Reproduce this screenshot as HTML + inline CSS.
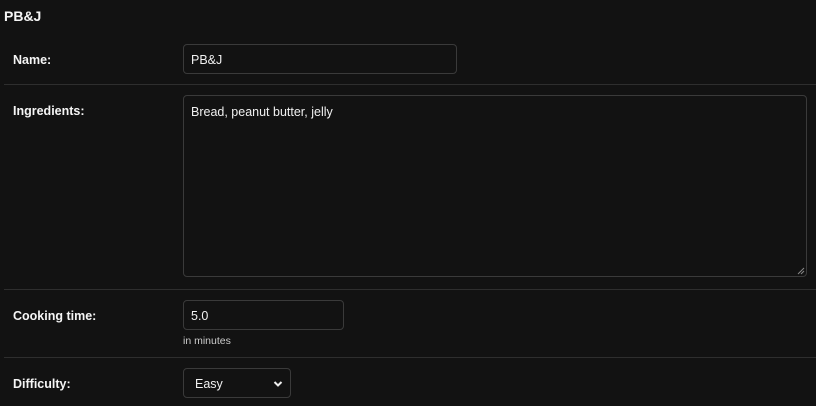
<!DOCTYPE html>
<html><head><style>
body{margin:0;background:#121212;width:816px;height:406px;overflow:hidden;font-family:"Liberation Sans",sans-serif;color:#eee;position:relative}
.a{position:absolute}
.t{left:4px;top:8px;font-size:14px;font-weight:bold;color:#f5f5f5}
.l{left:13px;font-size:12.5px;font-weight:bold;color:#f5f5f5}
.b{border:1px solid #3a3a3a;border-radius:4px;box-sizing:border-box;background:#121212;font-size:12.5px;color:#f0f0f0;padding:0 0 0 7px}
.s{left:4px;right:0;height:1px;background:#2e2e2e}
</style></head><body>
<div class="a t">PB&amp;J</div>
<div class="a l" style="top:53px">Name:</div>
<div class="a b" style="left:183px;top:44px;width:274px;height:30px;line-height:30px">PB&amp;J</div>
<div class="a s" style="top:84px"></div>
<div class="a l" style="top:104px">Ingredients:</div>
<div class="a b" style="left:183px;top:95px;width:624px;height:182px;padding-top:9px">Bread, peanut butter, jelly
<svg class="a" style="right:1px;bottom:1px" width="8" height="8"><path d="M1 7L7 1M4 7L7 4" stroke="#888" stroke-width="1"/></svg></div>
<div class="a s" style="top:289px"></div>
<div class="a l" style="top:309px">Cooking time:</div>
<div class="a b" style="left:183px;top:300px;width:161px;height:30px;line-height:31px">5.0</div>
<div class="a" style="left:183px;top:335px;font-size:10.5px;color:#ccc">in minutes</div>
<div class="a s" style="top:357px"></div>
<div class="a l" style="top:377px">Difficulty:</div>
<div class="a b" style="left:183px;top:368px;width:108px;height:30px;line-height:31px;padding-left:11px">Easy
<svg class="a" style="left:89px;top:11px" width="10" height="8"><path d="M1.5 2L5 5.5L8.5 2" stroke="#eee" stroke-width="2" fill="none"/></svg></div>
</body></html>
